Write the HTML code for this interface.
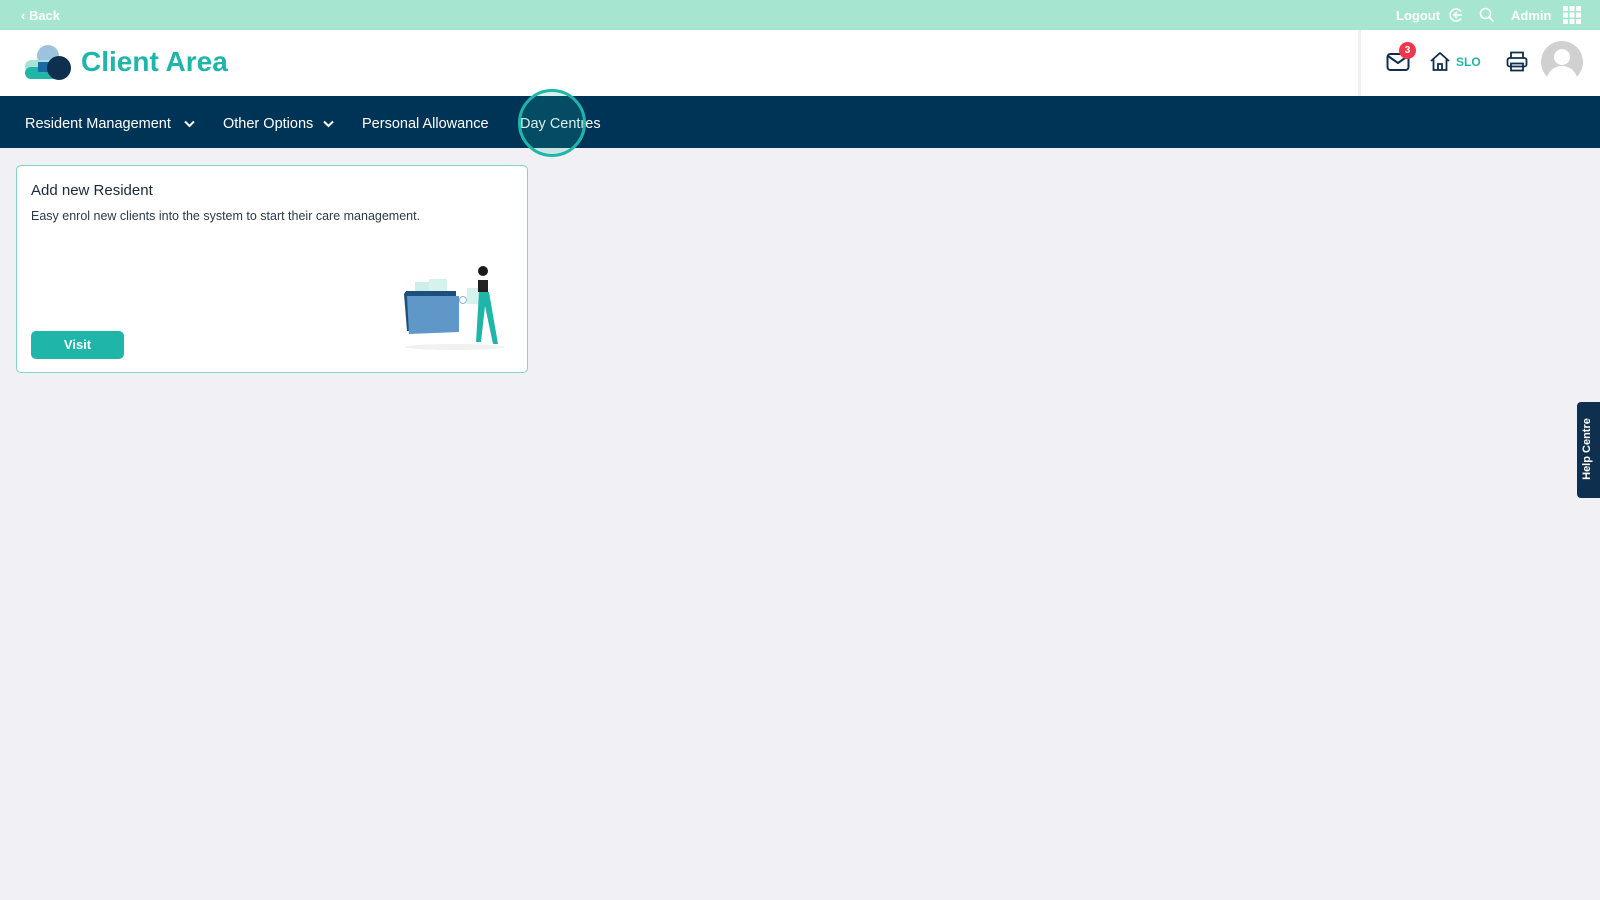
<!DOCTYPE html>
<html><head><meta charset="utf-8"><style>
*{margin:0;padding:0;box-sizing:border-box}
body{width:1600px;height:900px;background:#f0f0f5;font-family:"Liberation Sans",sans-serif;position:relative;overflow:hidden}
.a{position:absolute}
.top{left:0;top:0;width:1600px;height:30px;background:#a6e6d0;color:#fff;font-size:13px}
.hdr{left:0;top:30px;width:1600px;height:66px;background:#fff}
.nav{left:0;top:96px;width:1600px;height:52px;background:#003456;color:#fff;font-size:14.5px}
.nav span{position:absolute;top:20px}
.card{left:16px;top:165px;width:512px;height:208px;background:#fff;border:1.5px solid #7fd3c9;border-radius:5px}
</style></head><body>
<div class="a top">
 <div class="a" style="left:21px;top:8px;font-weight:bold">‹ Back</div>
 <div class="a" style="left:1396px;top:8px;font-weight:bold">Logout</div>
 <svg class="a" style="left:1448px;top:7px" width="16" height="16" viewBox="0 0 16 16" fill="none" stroke="#fff" stroke-width="1.6"><path d="M13 4.5A6 6 0 1 0 13 11.5"/><path d="M14 8H6M9 5L6 8l3 3"/></svg>
 <svg class="a" style="left:1479px;top:7px" width="16" height="16" viewBox="0 0 16 16" fill="none" stroke="#fff" stroke-width="1.6"><circle cx="6.5" cy="6.5" r="5"/><path d="M10 10l4.5 4.5"/></svg>
 <div class="a" style="left:1511px;top:8px;font-weight:bold">Admin</div>
 <svg class="a" style="left:1563px;top:6px" width="18" height="18" viewBox="0 0 18 18" fill="#fff"><rect x="0" y="0" width="5" height="5"/><rect x="6.5" y="0" width="5" height="5"/><rect x="13" y="0" width="5" height="5"/><rect x="0" y="6.5" width="5" height="5"/><rect x="6.5" y="6.5" width="5" height="5"/><rect x="13" y="6.5" width="5" height="5"/><rect x="0" y="13" width="5" height="5"/><rect x="6.5" y="13" width="5" height="5"/><rect x="13" y="13" width="5" height="5"/></svg>
</div>
<div class="a hdr">
 <svg class="a" style="left:24px;top:14px" width="50" height="38" viewBox="0 0 50 38"><circle cx="24" cy="12" r="11" fill="#9cc3de"/><rect x="1" y="16" width="36" height="13" rx="6.5" fill="#a6e2d8"/><rect x="1" y="23" width="36" height="12" rx="6" fill="#1fb5a8"/><path d="M14 18h20v10H14z" fill="#1a6aa8"/><circle cx="35" cy="24" r="12" fill="#0e2f4e"/></svg>
 <div class="a" style="left:81px;top:16px;font-size:28px;font-weight:bold;color:#1fb5a8">Client Area</div>
 <div class="a" style="left:1358px;top:0;width:3px;height:66px;background:#eef0f2"></div>
 <svg class="a" style="left:1386px;top:22px" width="24" height="20" viewBox="0 0 24 20" fill="none" stroke="#0e2f4e" stroke-width="2"><rect x="1.5" y="2" width="21" height="16" rx="3"/><path d="M2 4l10 7 10-7"/></svg>
 <div class="a" style="left:1399px;top:12px;width:17px;height:17px;border-radius:50%;background:#f0364a;color:#fff;font-size:10px;font-weight:bold;text-align:center;line-height:17px">3</div>
 <svg class="a" style="left:1430px;top:22px" width="20" height="19" viewBox="0 0 20 19" fill="none" stroke="#0e2f4e" stroke-width="1.8"><path d="M1 9L10 1l9 8M3.5 7v11h13V7M8 18v-6h4v6"/></svg>
 <div class="a" style="left:1456px;top:25px;font-size:12px;font-weight:bold;color:#1fb5a8">SLO</div>
 <svg class="a" style="left:1506px;top:21px" width="22" height="21" viewBox="0 0 22 21" fill="none" stroke="#0e2f4e" stroke-width="1.8"><path d="M5 7V1.5h12V7"/><rect x="1.5" y="7" width="19" height="8.5" rx="2"/><rect x="5" y="12.5" width="12" height="7"/></svg>
 <svg class="a" style="left:1541px;top:11px" width="42" height="42" viewBox="0 0 42 42"><circle cx="21" cy="21" r="21" fill="#d0d0d0"/><circle cx="21" cy="16" r="8" fill="#fff"/><path d="M6 36c3-8 9-11 15-11s12 3 15 11a21 21 0 0 1-30 0z" fill="#fff"/></svg>
</div>
<div class="a nav">
 <span style="left:25px">Resident Management</span>
 <svg class="a" style="left:184px;top:24px" width="11" height="8" viewBox="0 0 11 8" fill="none" stroke="#fff" stroke-width="2"><path d="M1 1.5l4.5 4.5L10 1.5"/></svg>
 <span style="left:223px">Other Options</span>
 <svg class="a" style="left:323px;top:24px" width="11" height="8" viewBox="0 0 11 8" fill="none" stroke="#fff" stroke-width="2"><path d="M1 1.5l4.5 4.5L10 1.5"/></svg>
 <span style="left:362px">Personal Allowance</span>
 <span style="left:520px">Day Centres</span>
 <div class="a" style="left:518px;top:-7px;width:68px;height:68px;border-radius:50%;border:3px solid #1fb5a8;background:rgba(31,181,168,0.18)"></div>
</div>
<div class="a card">
 <div class="a" style="left:14px;top:16px;font-size:15px;color:#1a2a3a">Add new Resident</div>
 <div class="a" style="left:14px;top:43px;font-size:12.5px;color:#2a3a4a">Easy enrol new clients into the system to start their care management.</div>
 <div class="a" style="left:14px;top:165px;width:93px;height:28px;border-radius:5px;background:#1fb5a8;color:#fff;font-size:13px;font-weight:bold;text-align:center;line-height:28px">Visit</div>
 <svg class="a" style="left:386px;top:98px" width="110" height="90" viewBox="0 0 110 90">
  <ellipse cx="52" cy="83" rx="50" ry="3" fill="#f0f2f2"/>
  <rect x="12" y="18" width="18" height="16" fill="#cdeee6"/><rect x="26" y="15" width="18" height="18" fill="#d6f2ec"/>
  <path d="M1 30l2-3h50v40H4z" fill="#1e4f7c"/><path d="M4 32h52v36L6 70z" fill="#5f98c8"/>
  <circle cx="60" cy="36" r="3.5" fill="none" stroke="#8fb6d4"/>
  <rect x="64" y="24" width="12" height="16" fill="#d6f2ec"/>
  <circle cx="80" cy="7" r="5" fill="#1a1a1a"/><rect x="75" y="16" width="10" height="12" fill="#222"/>
  <path d="M76 28l-3 50h5l4-36 8 38h5l-9-52z" fill="#1fb5a8"/>
 </svg>
</div>
<div class="a" style="left:1577px;top:402px;width:26px;height:96px;background:#0e2f4e;border-radius:4px 0 0 4px"></div>
<div class="a" style="left:1540px;top:442px;width:96px;height:14px;transform:rotate(-90deg);color:#fff;font-size:11px;font-weight:bold;text-align:center">Help Centre</div>
</body></html>
